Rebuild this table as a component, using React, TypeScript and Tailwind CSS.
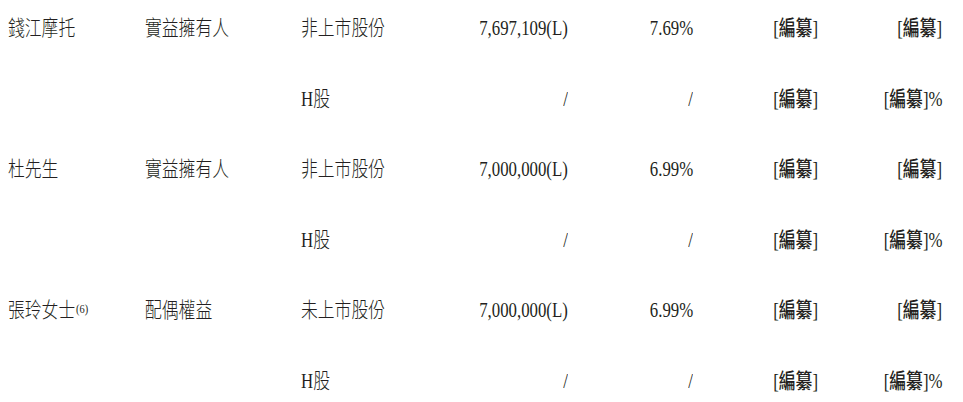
import React from "react";

type Row = {
  name?: React.ReactNode;
  cap?: string;
  kind: string;
  num: string;
  pct: string;
  a: React.ReactNode;
  b: React.ReactNode;
};

const B = () => <span className="font-medium">[編纂]</span>;

const rows: Row[] = [
  { name: "錢江摩托", cap: "實益擁有人", kind: "非上市股份", num: "7,697,109(L)", pct: "7.69%", a: <B />, b: <B /> },
  { kind: "H股", num: "/", pct: "/", a: <B />, b: <><B />%</> },
  { name: "杜先生", cap: "實益擁有人", kind: "非上市股份", num: "7,000,000(L)", pct: "6.99%", a: <B />, b: <B /> },
  { kind: "H股", num: "/", pct: "/", a: <B />, b: <><B />%</> },
  {
    name: (
      <>
        張玲女士<span className="relative top-[-4px] ml-[1px] text-[13px]">(6)</span>
      </>
    ),
    cap: "配偶權益",
    kind: "未上市股份",
    num: "7,000,000(L)",
    pct: "6.99%",
    a: <B />,
    b: <B />,
  },
  { kind: "H股", num: "/", pct: "/", a: <B />, b: <><B />%</> },
];

function L({ children, w }: { children?: React.ReactNode; w: string }) {
  return (
    <div className={`${w} shrink-0 whitespace-nowrap`}>
      <span className="inline-block origin-left scale-x-[0.8]">{children}</span>
    </div>
  );
}

function R({ children, w }: { children?: React.ReactNode; w: string }) {
  return (
    <div className={`${w} shrink-0 whitespace-nowrap text-right`}>
      <span className="inline-block origin-right scale-x-[0.8]">{children}</span>
    </div>
  );
}

export default function App() {
  return (
    <div
      className="w-[963px] h-[402px] bg-white overflow-hidden pt-[16px] pl-[8px] text-[#231f20] text-[21px] leading-[24px] font-light"
      style={{ fontFamily: '"Liberation Serif", "Noto Sans CJK TC", serif' }}
    >
      {rows.map((r, i) => (
        <div key={i} className="flex h-[70.6px] items-start">
          <L w="w-[137px]">{r.name}</L>
          <L w="w-[156px]">{r.cap}</L>
          <L w="w-[140px]">{r.kind}</L>
          <R w="w-[127px]">{r.num}</R>
          <R w="w-[125px]">{r.pct}</R>
          <R w="w-[125px]">{r.a}</R>
          <R w="w-[124px]">{r.b}</R>
        </div>
      ))}
    </div>
  );
}
